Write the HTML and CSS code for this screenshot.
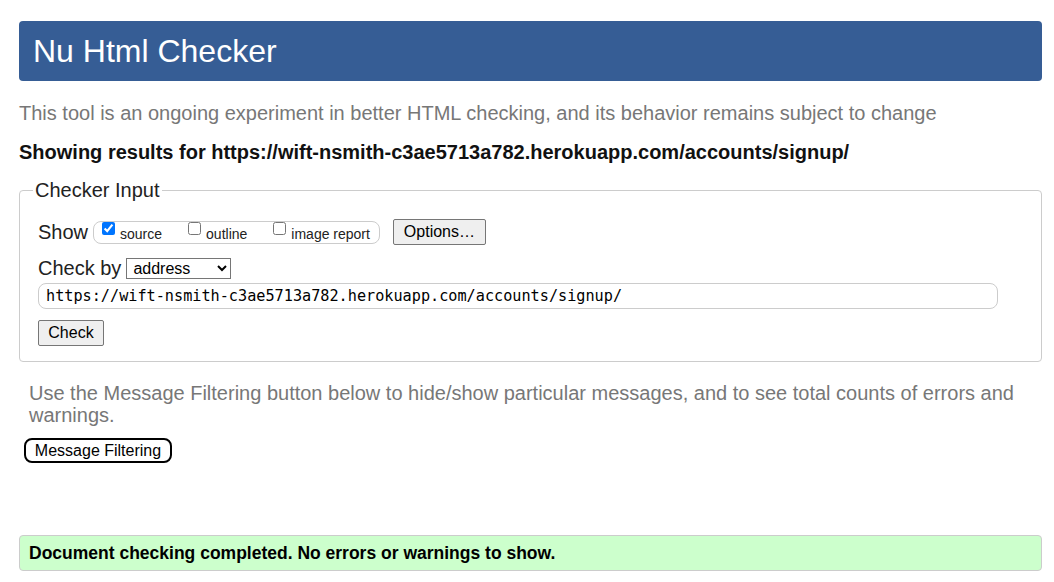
FILE: index.html
```html
<!DOCTYPE html>
<html>
<head>
<meta charset="utf-8">
<title>Showing results for https://wift-nsmith-c3ae5713a782.herokuapp.com/accounts/signup/ - Nu Html Checker</title>
<link rel="stylesheet" href="styles.css">
</head>
<body>
<div class="page">
  <h1 class="title">Nu Html Checker</h1>
  <p class="intro">This tool is an ongoing experiment in better HTML checking, and its behavior remains subject to change</p>
  <p class="showing">Showing results for https://wift-nsmith-c3ae5713a782.herokuapp.com/accounts/signup/</p>
  <fieldset class="input-box">
    <legend class="legend">Checker Input</legend>
    <div class="row row-show">
      <span class="label">Show</span>
      <span class="show-group">
        <label class="opt"><input type="checkbox" checked><span>source</span></label>
        <label class="opt"><input type="checkbox"><span>outline</span></label>
        <label class="opt"><input type="checkbox"><span>image report</span></label>
      </span>
      <button class="btn btn-options" type="button">Options…</button>
    </div>
    <div class="row row-by">
      <span class="label">Check by</span>
      <select class="select">
        <option>address</option>
        <option>file upload</option>
        <option>text input</option>
      </select>
    </div>
    <input class="url" type="text" value="https://wift-nsmith-c3ae5713a782.herokuapp.com/accounts/signup/">
    <div class="row row-check">
      <button class="btn btn-check" type="button">Check</button>
    </div>
  </fieldset>
  <p class="filter-note">Use the Message Filtering button below to hide/show particular messages, and to see total counts of errors and warnings.</p>
  <button class="filter-btn" type="button">Message Filtering</button>
  <p class="success">Document checking completed. No errors or warnings to show.</p>
</div>
</body>
</html>
```

FILE: styles.css
```css
html, body {
  margin: 0;
  padding: 0;
  background: #fff;
}

body {
  font-family: "Liberation Sans", Arial, sans-serif;
  color: #222;
}

.page {
  margin: 21px 12px 0 19px;
  display: flex;
  flex-direction: column;
  align-items: stretch;
}

.title {
  margin: 0;
  height: 60px;
  line-height: 60px;
  padding-left: 14px;
  background: #365d95;
  color: #fff;
  font-size: 32px;
  font-weight: normal;
  border-radius: 4px;
}

.intro {
  margin: 20px 0 0;
  font-size: 20px;
  line-height: 24px;
  color: #777;
}

.showing {
  margin: 16px 0 0;
  font-size: 20px;
  line-height: 22px;
  font-weight: bold;
  color: #111;
}

.input-box {
  margin: 16px 0 0;
  padding: 0 13px 15px 13px;
  border: 1px solid #ccc;
  border-radius: 4px;
  min-width: 0;
}

.legend {
  padding: 0 2px;
  font-size: 20px;
  line-height: 22px;
  color: #222;
}

.row {
  display: flex;
  align-items: center;
  margin-left: 5px;
}

.label {
  font-size: 20px;
  line-height: 24px;
  color: #222;
}

.row-show {
  margin-top: 17px;
  height: 28px;
}

.show-group {
  display: flex;
  align-items: center;
  margin-left: 5px;
  height: 23px;
  box-sizing: border-box;
  padding: 0 9px 0 4px;
  border: 1px solid #ccc;
  border-radius: 8px;
}

.opt {
  display: flex;
  align-items: flex-start;
  font-size: 14px;
  line-height: 16px;
  color: #222;
  margin-right: 22px;
}

.opt:last-child {
  margin-right: 0;
}

.opt input {
  width: 13px;
  height: 13px;
  margin: 0 5px 0 4px;
  position: relative;
  top: -1px;
}

.opt span {
  padding-top: 3px;
}

.btn {
  font-family: "Liberation Sans", Arial, sans-serif;
  font-size: 16px;
  color: #000;
  background: #efefef;
  border: 1px solid #767676;
  border-radius: 2px;
  height: 26px;
  padding: 0 9px;
}

.btn-options {
  margin-left: 13px;
  width: 93px;
}

.row-by {
  margin-top: 10px;
  height: 24px;
}

.select {
  margin-left: 5px;
  width: 105px;
  height: 21px;
  font-family: "Liberation Sans", Arial, sans-serif;
  font-size: 16px;
  color: #000;
  border: 1px solid #767676;
  border-radius: 0;
  background: #fff;
  padding: 0 2px;
}

.url {
  display: block;
  margin: 3px 0 0 5px;
  width: 960px;
  height: 26px;
  box-sizing: border-box;
  padding: 0 7px;
  border: 1px solid #ccc;
  border-radius: 8px;
  font-family: "DejaVu Sans Mono", "Liberation Mono", monospace;
  font-size: 15.2px;
  color: #000;
  outline: none;
}

.row-check {
  margin-top: 11px;
}

.btn-check {
  width: 66px;
}

.filter-note {
  margin: 20px 0 0 10px;
  font-size: 20px;
  line-height: 22px;
  color: #777;
}

.filter-btn {
  align-self: flex-start;
  box-sizing: border-box;
  margin: 12px 0 0 5px;
  width: 148px;
  height: 25px;
  padding: 0;
  font-family: "Liberation Sans", Arial, sans-serif;
  font-size: 16px;
  color: #000;
  background: #fff;
  border: 2px solid #000;
  border-radius: 8px;
}

.success {
  margin: 72px 0 0;
  height: 36px;
  box-sizing: border-box;
  padding: 0 9px;
  display: flex;
  align-items: center;
  background: #ccffcc;
  border: 1px solid #ccc;
  border-radius: 4px;
  font-size: 17.5px;
  font-weight: bold;
  color: #000;
}
```
